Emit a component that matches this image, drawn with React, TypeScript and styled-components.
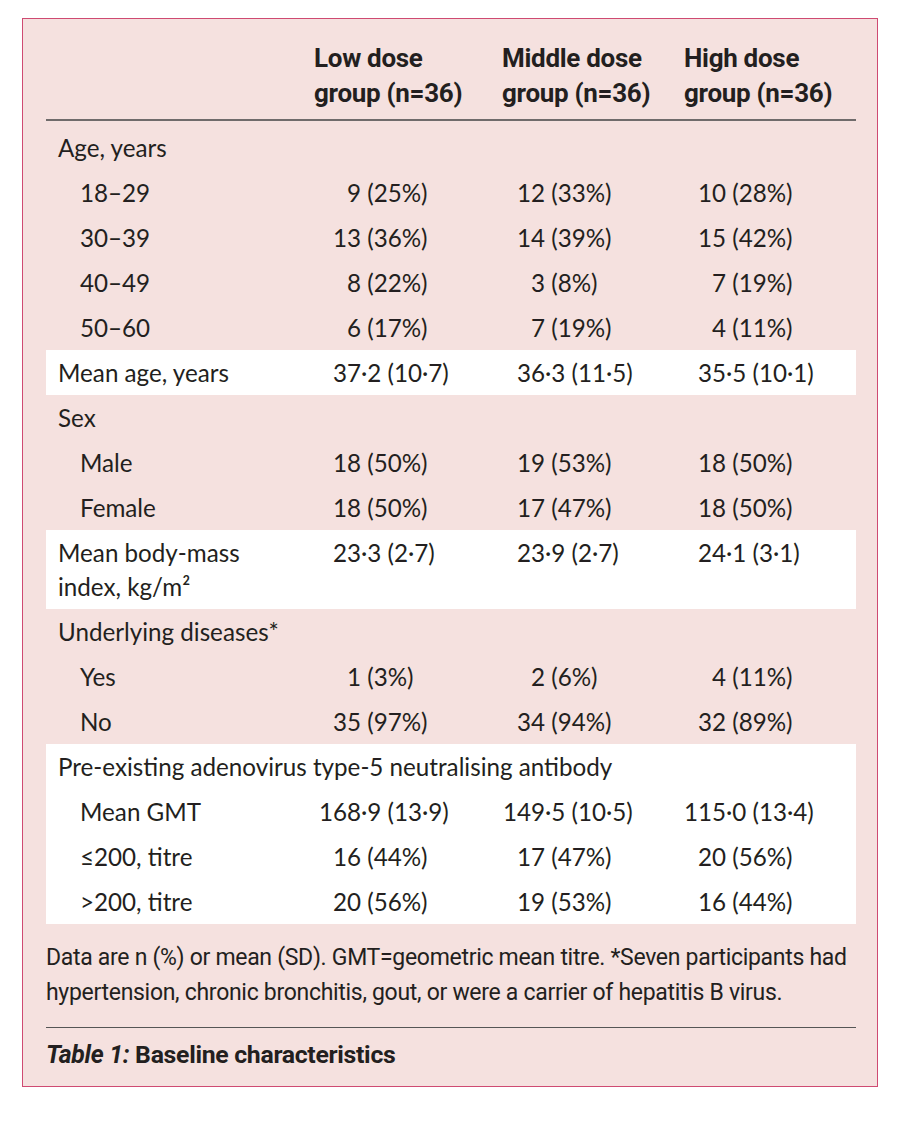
import React, { FC } from "react";
import styled, { createGlobalStyle } from "styled-components";

const GlobalStyle = createGlobalStyle`
  html, body {
    margin: 0;
    padding: 0;
    background: #ffffff;
  }
`;

const INK = "#231f20";
const BODY_FONT = `"Lato", "Open Sans", sans-serif`;
const NARROW_FONT = `"Roboto", "Open Sans", sans-serif`;

type Values = [string, string, string];

interface Row {
  label: string[];
  sub?: boolean;
  values?: Values;
}

interface Section {
  band?: boolean;
  rows: Row[];
}

const sections: Section[] = [
  {
    rows: [
      { label: ["Age, years"] },
      { label: ["18–29"], sub: true, values: ["9 (25%)", "12 (33%)", "10 (28%)"] },
      { label: ["30–39"], sub: true, values: ["13 (36%)", "14 (39%)", "15 (42%)"] },
      { label: ["40–49"], sub: true, values: ["8 (22%)", "3 (8%)", "7 (19%)"] },
      { label: ["50–60"], sub: true, values: ["6 (17%)", "7 (19%)", "4 (11%)"] },
    ],
  },
  {
    band: true,
    rows: [{ label: ["Mean age, years"], values: ["37·2 (10·7)", "36·3 (11·5)", "35·5 (10·1)"] }],
  },
  {
    rows: [
      { label: ["Sex"] },
      { label: ["Male"], sub: true, values: ["18 (50%)", "19 (53%)", "18 (50%)"] },
      { label: ["Female"], sub: true, values: ["18 (50%)", "17 (47%)", "18 (50%)"] },
    ],
  },
  {
    band: true,
    rows: [
      {
        label: ["Mean body-mass", "index, kg/m²"],
        values: ["23·3 (2·7)", "23·9 (2·7)", "24·1 (3·1)"],
      },
    ],
  },
  {
    rows: [
      { label: ["Underlying diseases*"] },
      { label: ["Yes"], sub: true, values: ["1 (3%)", "2 (6%)", "4 (11%)"] },
      { label: ["No"], sub: true, values: ["35 (97%)", "34 (94%)", "32 (89%)"] },
    ],
  },
  {
    band: true,
    rows: [
      { label: ["Pre-existing adenovirus type-5 neutralising antibody"] },
      { label: ["Mean GMT"], sub: true, values: ["168·9 (13·9)", "149·5 (10·5)", "115·0 (13·4)"] },
      { label: ["≤200, titre"], sub: true, values: ["16 (44%)", "17 (47%)", "20 (56%)"] },
      { label: [">200, titre"], sub: true, values: ["20 (56%)", "19 (53%)", "16 (44%)"] },
    ],
  },
];

// width of the integer part box in each data column (decimal alignment)
const intWidths = [47, 43, 42];

const Page = styled.div`
  padding: 18px 0 0 22px;
  width: 856px;
`;

const Panel = styled.div`
  background: #f5e1df;
  border: 1.5px solid #cf4a72;
  padding: 22px 21px 14px 23px;
  color: ${INK};
`;

const Grid = styled.div`
  display: grid;
  grid-template-columns: 268px 188px 182px 172px;
`;

const HeadRow = styled(Grid)`
  padding-bottom: 8px;
  border-bottom: 2px solid #6f6b6b;
`;

const HeadCell = styled.div`
  font-family: ${NARROW_FONT};
  font-weight: 700;
  font-size: 26px;
  line-height: 35px;
  letter-spacing: -0.3px;
  white-space: nowrap;
`;

const Body = styled.div`
  padding-top: 4px;
`;

const Block = styled.div<{ $band?: boolean }>`
  background: ${(p) => (p.$band ? "#ffffff" : "transparent")};
`;

const RowGrid = styled(Grid)`
  padding: 5.5px 0;
  font-family: ${BODY_FONT};
  font-size: 24.2px;
  line-height: 34px;
`;

const Label = styled.div<{ $sub?: boolean; $wide?: boolean }>`
  padding-left: ${(p) => (p.$sub ? 34 : 12)}px;
  grid-column: ${(p) => (p.$wide ? "1 / -1" : "auto")};
  white-space: nowrap;
`;

const DataCell = styled.div`
  display: flex;
  white-space: pre;
`;

const IntPart = styled.span<{ $w: number }>`
  display: inline-block;
  width: ${(p) => p.$w}px;
  text-align: right;
`;

const Footnote = styled.p`
  margin: 16px 0 0;
  font-family: ${NARROW_FONT};
  font-size: 23px;
  line-height: 35px;
  letter-spacing: -0.3px;
  white-space: nowrap;
  padding-bottom: 17px;
  border-bottom: 1px solid #555;
`;

const Caption = styled.div`
  margin-top: 9px;
  font-family: ${NARROW_FONT};
  font-weight: 700;
  font-size: 24.8px;
  line-height: 35px;
  letter-spacing: -0.3px;
  em {
    font-style: italic;
  }
`;

const Value: FC<{ text: string; col: number }> = ({ text, col }) => {
  const m = text.match(/^(\d+)(.*)$/);
  const int = m ? m[1] : "";
  const rest = m ? m[2] : text;
  return (
    <DataCell>
      <IntPart $w={intWidths[col]}>{int}</IntPart>
      <span>{rest}</span>
    </DataCell>
  );
};

const TableRow: FC<{ row: Row }> = ({ row }) => (
  <RowGrid>
    <Label $sub={row.sub} $wide={!row.values}>
      {row.label.map((l, i) => (
        <div key={i}>{l}</div>
      ))}
    </Label>
    {row.values && row.values.map((v, i) => <Value key={i} text={v} col={i} />)}
  </RowGrid>
);

const App: FC = () => (
  <>
    <GlobalStyle />
    <Page>
      <Panel>
        <HeadRow>
          <div />
          <HeadCell>
            Low dose
            <br />
            group (n=36)
          </HeadCell>
          <HeadCell>
            Middle dose
            <br />
            group (n=36)
          </HeadCell>
          <HeadCell>
            High dose
            <br />
            group (n=36)
          </HeadCell>
        </HeadRow>
        <Body>
          {sections.map((s, i) => (
            <Block key={i} $band={s.band}>
              {s.rows.map((r, j) => (
                <TableRow key={j} row={r} />
              ))}
            </Block>
          ))}
        </Body>
        <Footnote>
          Data are n (%) or mean (SD). GMT=geometric mean titre. *Seven participants had
          <br />
          hypertension, chronic bronchitis, gout, or were a carrier of hepatitis B virus.
        </Footnote>
        <Caption>
          <em>Table 1:</em> Baseline characteristics
        </Caption>
      </Panel>
    </Page>
  </>
);

export default App;
